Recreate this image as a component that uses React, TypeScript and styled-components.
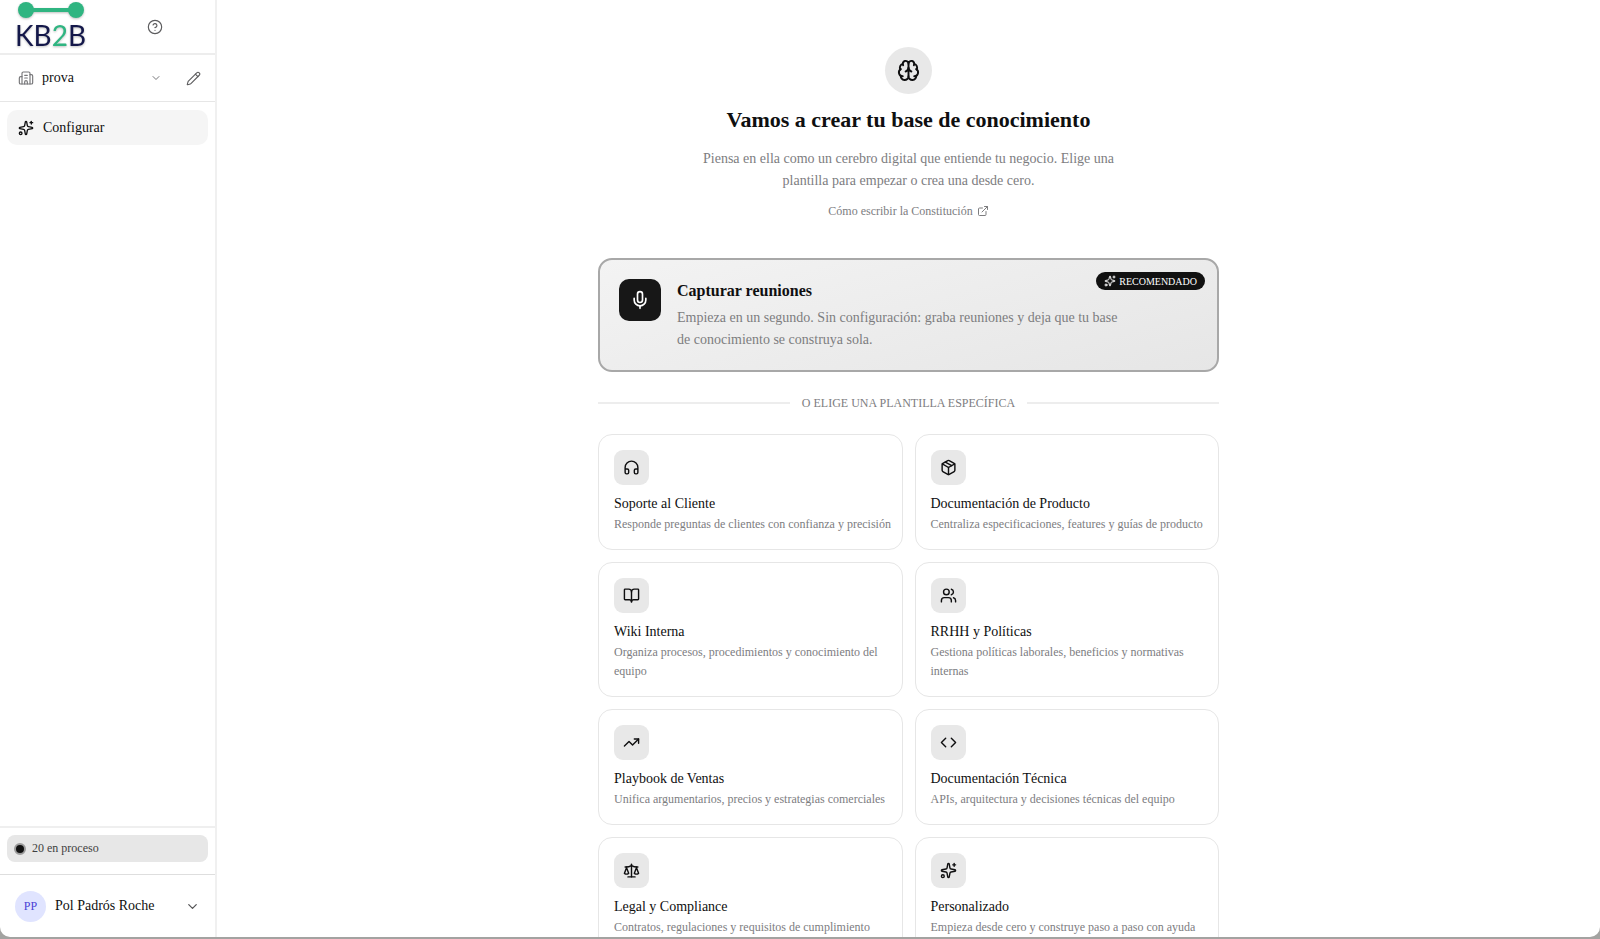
import React from "react";
import styled, { createGlobalStyle } from "styled-components";
import {
  BookOpen,
  Brain,
  Building2,
  ChevronDown,
  CircleHelp,
  Code,
  ExternalLink,
  Headphones,
  Mic,
  Package,
  Pencil,
  Scale,
  Sparkles,
  TrendingUp,
  Users,
} from "lucide-react";
import type { LucideIcon } from "lucide-react";

const color = {
  ink: "#0f0f10",
  muted: "#7d7d7f",
  line: "#e6e6e6",
  tile: "#e8e8e8",
};

const GlobalStyle = createGlobalStyle`
  *, *::before, *::after { box-sizing: border-box; }
  body {
    margin: 0;
    background: #a3a3a1;
    color: ${color.ink};
    font-family: "Liberation Serif", "Times New Roman", serif;
    font-size: 14px;
  }
  button { font: inherit; color: inherit; border: 0; background: none; padding: 0; cursor: pointer; text-align: left; }
  h1, h2, h3, p { margin: 0; }
  svg { flex: none; display: block; }
`;

const Desktop = styled.div`
  height: 100vh;
  padding-bottom: 2px;
`;

const Window = styled.div`
  display: flex;
  height: 100%;
  overflow: hidden;
  background: #fff;
  border-radius: 0 0 10px 10px;
`;

const Sidebar = styled.aside`
  display: flex;
  flex-direction: column;
  flex: none;
  width: 217px;
  border-right: 2px solid #f0f0f0;
`;

const SidebarHeader = styled.header`
  display: flex;
  align-items: center;
  justify-content: space-between;
  height: 55px;
  padding: 0 52px 0 15px;
  border-bottom: 2px solid #ededed;
`;

const IconButton = styled.button`
  display: flex;
  color: #5c5c5e;
`;

const Workspace = styled.div`
  display: flex;
  align-items: center;
  justify-content: space-between;
  height: 47px;
  padding: 0 14px 0 18px;
  border-bottom: 1px solid ${color.line};
`;

const WorkspaceButton = styled.button`
  display: flex;
  align-items: center;
  gap: 8px;
  width: 144px;
  color: #77777a;
`;

const Grow = styled.span`
  flex: 1;
  color: ${color.ink};
`;

const Nav = styled.nav`
  flex: 1;
  padding: 8px 7px;
`;

const NavItem = styled.button`
  display: flex;
  align-items: center;
  gap: 9px;
  width: 100%;
  height: 35px;
  padding: 0 11px;
  border-radius: 10px;
  background: #f5f5f5;
`;

const Status = styled.div`
  padding: 7px 7px 12px;
  border-top: 2px solid #efefef;
`;

const StatusChip = styled.button`
  display: flex;
  align-items: center;
  gap: 6px;
  width: 100%;
  height: 27px;
  padding: 0 7px;
  border-radius: 8px;
  background: #e7e7e7;
  color: #3f3f41;
  font-size: 12px;
`;

const Dot = styled.span`
  width: 12px;
  height: 12px;
  border: 2px solid #9b9b9b;
  border-radius: 50%;
  background: #111;
`;

const Account = styled.button`
  display: flex;
  align-items: center;
  gap: 9px;
  height: 63px;
  padding: 0 15px;
  border-top: 1px solid #dedede;
`;

const Avatar = styled.span`
  display: grid;
  place-items: center;
  width: 31px;
  height: 31px;
  border-radius: 50%;
  background: #e0e4ff;
  color: #4b43d6;
  font-size: 12px;
`;

const Main = styled.main`
  flex: 1;
  min-width: 0;
  overflow: hidden;
  padding: 47px 24px 0;
`;

const Content = styled.div`
  display: flex;
  flex-direction: column;
  max-width: 621px;
  margin: 0 auto;
`;

const Intro = styled.section`
  display: flex;
  flex-direction: column;
  align-items: center;
  text-align: center;
`;

const BrainBadge = styled.span`
  display: grid;
  place-items: center;
  width: 47px;
  height: 47px;
  border-radius: 50%;
  background: ${color.tile};
`;

const Title = styled.h1`
  margin-top: 12px;
  font-size: 22px;
  line-height: 28px;
`;

const Lead = styled.p`
  max-width: 436px;
  margin-top: 14px;
  color: ${color.muted};
  line-height: 22px;
`;

const DocsLink = styled.a`
  display: flex;
  align-items: center;
  gap: 4px;
  margin-top: 11px;
  color: ${color.muted};
  font-size: 12px;
  line-height: 16px;
  text-decoration: none;
`;

const Featured = styled.button`
  position: relative;
  display: flex;
  gap: 16px;
  margin-top: 39px;
  padding: 19px;
  border: 2px solid #a8a8a8;
  border-radius: 14px;
  background: linear-gradient(165deg, #f3f3f3, #e6e6e6);
`;

const FeaturedIcon = styled.span`
  display: grid;
  place-items: center;
  flex: none;
  width: 42px;
  height: 42px;
  border-radius: 10px;
  background: #171717;
  color: #fff;
`;

const FeaturedBody = styled.span`
  display: block;
  padding-right: 72px;
`;

const FeaturedTitle = styled.span`
  display: block;
  font-size: 16px;
  font-weight: 700;
  line-height: 23px;
`;

const FeaturedText = styled.span`
  display: block;
  margin-top: 5px;
  color: ${color.muted};
  line-height: 22px;
`;

const Badge = styled.span`
  position: absolute;
  top: 12px;
  right: 12px;
  display: flex;
  align-items: center;
  gap: 3px;
  height: 18px;
  padding: 0 8px;
  border-radius: 9px;
  background: #111;
  color: #fff;
  font-size: 10px;
`;

const Divider = styled.h2`
  display: flex;
  align-items: center;
  gap: 12px;
  margin: 23px 0;
  color: ${color.muted};
  font-size: 12px;
  font-weight: 400;
  line-height: 16px;
  text-transform: uppercase;

  &::before,
  &::after {
    content: "";
    flex: 1;
    height: 2px;
    background: #ededed;
  }
`;

const Grid = styled.div`
  display: grid;
  grid-template-columns: 1fr 1fr;
  gap: 12px;
`;

const Card = styled.button`
  display: flex;
  flex-direction: column;
  align-items: flex-start;
  padding: 15px 8px 15px 15px;
  border: 1px solid ${color.line};
  border-radius: 14px;
`;

const CardIcon = styled.span`
  display: grid;
  place-items: center;
  width: 35px;
  height: 35px;
  border-radius: 9px;
  background: ${color.tile};
`;

const CardTitle = styled.span`
  margin-top: 10px;
  line-height: 18px;
`;

const CardText = styled.span`
  margin-top: 2px;
  color: ${color.muted};
  font-size: 12px;
  line-height: 19px;
`;

const LogoSvg = styled.svg`
  filter: drop-shadow(0 1px 1px rgba(0, 0, 0, 0.25));
`;

const Logo = () => (
  <LogoSvg width="76" height="53" viewBox="0 0 76 53" role="img" aria-label="KB2B">
    <path d="M11 10H61" stroke="#2fb581" strokeWidth="4" />
    <circle cx="11" cy="10" r="8" fill="#2fb581" />
    <circle cx="61" cy="10" r="8" fill="#2fb581" />
    <text x="0" y="46" fontFamily="Lato, sans-serif" fontSize="28" fill="#14184a">
      KB<tspan fill="#2fb581">2</tspan>B
    </text>
  </LogoSvg>
);

type Template = { icon: LucideIcon; title: string; text: string };

const templates: Template[] = [
  { icon: Headphones, title: "Soporte al Cliente", text: "Responde preguntas de clientes con confianza y precisión" },
  { icon: Package, title: "Documentación de Producto", text: "Centraliza especificaciones, features y guías de producto" },
  { icon: BookOpen, title: "Wiki Interna", text: "Organiza procesos, procedimientos y conocimiento del equipo" },
  { icon: Users, title: "RRHH y Políticas", text: "Gestiona políticas laborales, beneficios y normativas internas" },
  { icon: TrendingUp, title: "Playbook de Ventas", text: "Unifica argumentarios, precios y estrategias comerciales" },
  { icon: Code, title: "Documentación Técnica", text: "APIs, arquitectura y decisiones técnicas del equipo" },
  { icon: Scale, title: "Legal y Compliance", text: "Contratos, regulaciones y requisitos de cumplimiento" },
  { icon: Sparkles, title: "Personalizado", text: "Empieza desde cero y construye paso a paso con ayuda" },
];

export default function App() {
  return (
    <Desktop>
      <GlobalStyle />
      <Window>
        <Sidebar>
          <SidebarHeader>
            <Logo />
            <IconButton aria-label="Ayuda">
              <CircleHelp size={16} strokeWidth={1.75} />
            </IconButton>
          </SidebarHeader>
          <Workspace>
            <WorkspaceButton>
              <Building2 size={16} strokeWidth={1.75} />
              <Grow>prova</Grow>
              <ChevronDown size={12} />
            </WorkspaceButton>
            <IconButton aria-label="Editar">
              <Pencil size={15} strokeWidth={1.75} />
            </IconButton>
          </Workspace>
          <Nav>
            <NavItem aria-current="page">
              <Sparkles size={16} />
              Configurar
            </NavItem>
          </Nav>
          <Status>
            <StatusChip>
              <Dot />
              20 en proceso
            </StatusChip>
          </Status>
          <Account>
            <Avatar>PP</Avatar>
            <Grow>Pol Padrós Roche</Grow>
            <ChevronDown size={15} color="#555557" />
          </Account>
        </Sidebar>
        <Main>
          <Content>
            <Intro>
              <BrainBadge>
                <Brain size={23} />
              </BrainBadge>
              <Title>Vamos a crear tu base de conocimiento</Title>
              <Lead>
                Piensa en ella como un cerebro digital que entiende tu negocio. Elige una plantilla para empezar o crea
                una desde cero.
              </Lead>
              <DocsLink href="#constitucion">
                Cómo escribir la Constitución
                <ExternalLink size={12} />
              </DocsLink>
            </Intro>
            <Featured>
              <FeaturedIcon>
                <Mic size={20} />
              </FeaturedIcon>
              <FeaturedBody>
                <FeaturedTitle>Capturar reuniones</FeaturedTitle>
                <FeaturedText>
                  Empieza en un segundo. Sin configuración: graba reuniones y deja que tu base de conocimiento se
                  construya sola.
                </FeaturedText>
              </FeaturedBody>
              <Badge>
                <Sparkles size={12} />
                RECOMENDADO
              </Badge>
            </Featured>
            <Divider>O elige una plantilla específica</Divider>
            <Grid>
              {templates.map(({ icon: Icon, title, text }) => (
                <Card key={title}>
                  <CardIcon>
                    <Icon size={17} />
                  </CardIcon>
                  <CardTitle>{title}</CardTitle>
                  <CardText>{text}</CardText>
                </Card>
              ))}
            </Grid>
          </Content>
        </Main>
      </Window>
    </Desktop>
  );
}
